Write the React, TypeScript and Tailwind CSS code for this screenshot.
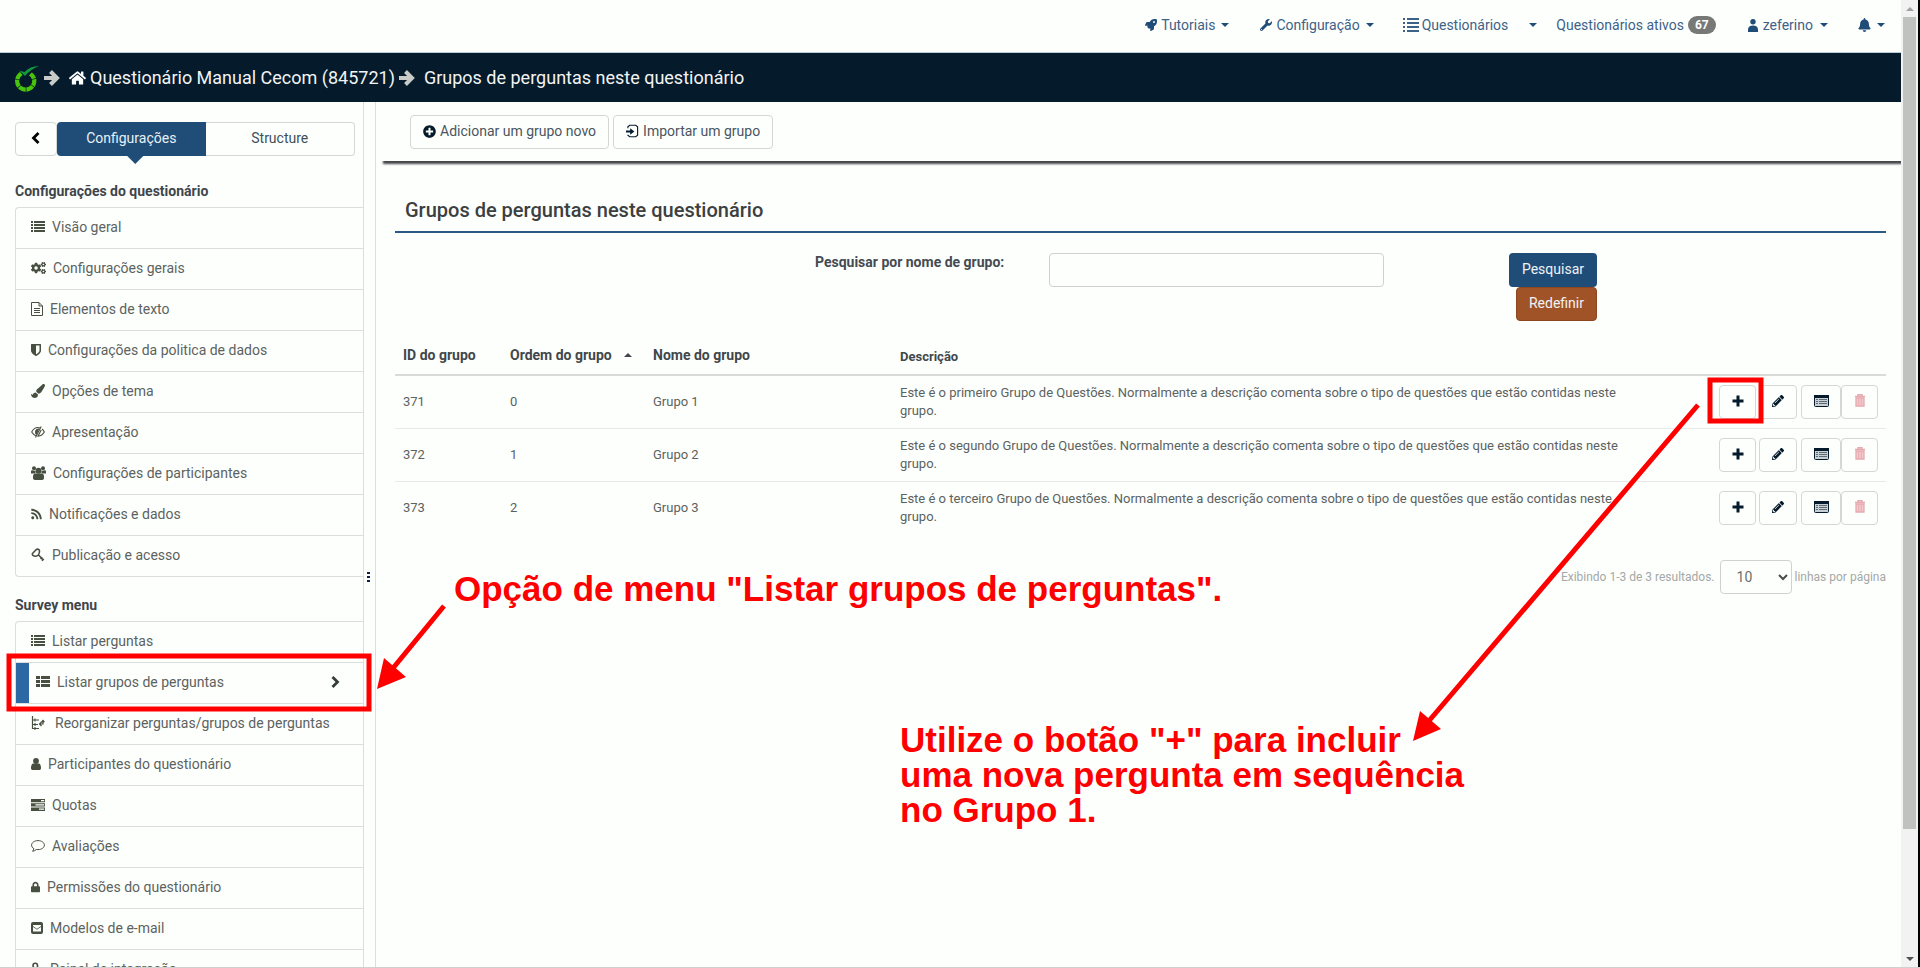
import React from "react";
import {
  FaBell, FaCogs, FaHome, FaLock, FaPaintBrush, FaPencilAlt, FaPlusCircle, FaRocket, FaRss, FaWrench,
} from "react-icons/fa";

type IconProps = { className?: string };

const CaretDown = ({ className }: IconProps) => (
  <svg viewBox="0 0 8 4" className={`h-1 w-2 shrink-0 ${className ?? ""}`} fill="currentColor" aria-hidden="true"><path d="M0 0h8L4 4z" /></svg>
);

const CaretUp = ({ className }: IconProps) => (
  <svg viewBox="0 0 8 4" className={`h-1 w-2 shrink-0 ${className ?? ""}`} fill="currentColor" aria-hidden="true"><path d="M0 4h8L4 0z" /></svg>
);

const ArrowRight = ({ className }: IconProps) => (
  <svg viewBox="0 0 16 16" className={className} fill="none" stroke="currentColor" strokeWidth="4" aria-hidden="true">
    <path d="M0 8h12M6.500 1.500 13 8l-6.500 6.500" />
  </svg>
);

const ChevronRight = ({ className }: IconProps) => (
  <svg viewBox="0 0 12 12" className={className} fill="none" stroke="currentColor" strokeWidth="2.800" aria-hidden="true"><path d="m3.500 1 5 5-5 5" /></svg>
);

const ChevronLeft = ({ className }: IconProps) => (
  <svg viewBox="0 0 12 12" className={className} fill="none" stroke="currentColor" strokeWidth="2.800" aria-hidden="true"><path d="m8.500 1-5 5 5 5" /></svg>
);

const ChevronDown = ({ className }: IconProps) => (
  <svg viewBox="0 0 10 10" className={className} fill="none" stroke="currentColor" strokeWidth="2" aria-hidden="true"><path d="m1 3 4 4 4-4" /></svg>
);

const Plus = ({ className }: IconProps) => (
  <svg viewBox="0 0 12 12" className={className} fill="none" stroke="currentColor" strokeWidth="3" aria-hidden="true"><path d="M6 .5v11M.5 6h11" /></svg>
);

const Trash = ({ className }: IconProps) => (
  <svg viewBox="0 0 12 13" className={className} fill="none" stroke="currentColor" aria-hidden="true">
    <path d="M1 2.500h10M4 2.500V.700h4v1.800" strokeWidth="1.400" />
    <path d="M2 4v8h8V4z" fill="#efc9cd" strokeWidth="1.300" />
    <path d="M4.700 5v6M7.300 5v6" strokeWidth="0.900" />
  </svg>
);

const List = ({ className }: IconProps) => (
  <svg viewBox="0 0 14 12" className={className} fill="currentColor" aria-hidden="true">
    <path d="M0 0h2v2H0zM3 0h11v2H3zM0 3h2v2H0zM3 3h11v2H3zM0 6h2v2H0zM3 6h11v2H3zM0 9h2v2H0zM3 9h11v2H3z" />
  </svg>
);

const NavList = ({ className }: IconProps) => (
  <svg viewBox="0 0 16 14" className={className} fill="currentColor" aria-hidden="true">
    <path d="M0 0h2v2H0zM4 0h12v2H4zM0 4h2v2H0zM4 4h12v2H4zM0 8h2v2H0zM4 8h12v2H4zM0 12h2v2H0zM4 12h12v2H4z" />
  </svg>
);

const ThList = ({ className }: IconProps) => (
  <svg viewBox="0 0 14 12" className={className} fill="currentColor" aria-hidden="true">
    <path d="M0 0h4v3H0zM5 0h9v3H5zM0 4h4v3H0zM5 4h9v3H5zM0 8h4v3H0zM5 8h9v3H5z" />
  </svg>
);

const FileText = ({ className }: IconProps) => (
  <svg viewBox="0 0 12 14" className={className} fill="none" stroke="currentColor" aria-hidden="true">
    <path d="M.5.5h7.500l3.500 3.500v9.500H.5zM8 .5V4h3.500M3 6.500h6M3 8.500h6M3 10.500h6" />
  </svg>
);

const Shield = ({ className }: IconProps) => (
  <svg viewBox="0 0 1280 1536" className={className} fill="currentColor" aria-hidden="true">
    <path d="M1088 832V192H640v1137q119-63 213-137 235-184 235-360zm192-768v768q0 86-33.500 170.500t-83 150-118 127.500-126.500 103-121 77.500-89.500 49.500-42.500 20q-12 6-26 6t-26-6q-16-7-42.500-20t-89.500-49.500-121-77.500-126.500-103-118-127.500-83-150T0 832V64q0-26 19-45T64 0h1152q26 0 45 19t19 45z" />
  </svg>
);

const EyeHalf = ({ className }: IconProps) => (
  <svg viewBox="0 0 14 12" className={className} aria-hidden="true">
    <path d="M9.500 2C6 .800 2.500 2.500.7 6c1 1.700 2.300 3 4.300 3.700" fill="none" stroke="currentColor" strokeWidth="1.100" />
    <path d="M8.300 2.500A3.500 3.500 0 0 0 4 6c0 1.300.5 2.300 1.500 3z" fill="currentColor" />
    <path d="M11 3c1 .700 1.800 1.700 2.300 3-1.300 2.500-3.500 4-6.300 4.200L10.200 4M10.200.5 4.500 11.500" fill="none" stroke="currentColor" strokeWidth="1.100" />
  </svg>
);

const Group = ({ className }: IconProps) => (
  <svg viewBox="0 0 15 14" className={className} aria-hidden="true" fill="currentColor">
    <circle cx="3" cy="2.200" r="2" /><circle cx="12" cy="2.200" r="2" />
    <path d="M0 7.500V5.500C0 4.500.8 4 1.500 4.200L4.500 5 4.500 7.500zM15 7.500V5.500c0-1-.8-1.500-1.500-1.300L10.500 5v2.500z" />
    <circle cx="7.500" cy="4.700" r="3" />
    <path d="M2 12V10.500C2 8.500 3 7.500 4.500 7.500h6c1.500 0 2.500 1 2.500 3V12c0 1.200-.8 2-2 2H4c-1.200 0-2-.8-2-2z" />
  </svg>
);

const User = ({ className }: IconProps) => (
  <svg viewBox="0 0 10 12" className={className} aria-hidden="true" fill="currentColor">
    <circle cx="5" cy="3" r="2.900" />
    <path d="M0 10.200C0 7.500.8 5.600 2.500 5.600h5C9.200 5.600 10 7.500 10 10.200 10 11.300 9.200 12 8.200 12H1.800C.8 12 0 11.300 0 10.200z" />
  </svg>
);

const CommentOutline = ({ className }: IconProps) => (
  <svg viewBox="0 0 14 12" className={className} aria-hidden="true" fill="none" stroke="currentColor">
    <path d="M7 .600c3.600 0 6.400 2 6.400 4.500S10.600 9.600 7 9.600c-.6 0-1.100 0-1.600-.1-1.100.9-2.400 1.600-3.900 1.800.7-.7 1.200-1.500 1.400-2.600C1.400 7.900.6 6.600.6 5.100.6 2.600 3.400.6 7 .6z" />
  </svg>
);

const KeyOutline = ({ className }: IconProps) => (
  <svg viewBox="0 0 14 14" className={className} aria-hidden="true" fill="none" stroke="currentColor" strokeWidth="1.600">
    <path d="M1.500 5.500 5 1.800c1.500-1.400 3.500-.4 3.500 1.200 0 1.800-1 5-3.500 5.200C3 8.400.8 7.500 1.500 5.500zM7 6.500l5.500 5.500M9.500 11l1.700-1.700M11 12.800l1.800-1.800" />
  </svg>
);

const Tree = ({ className }: IconProps) => (
  <svg viewBox="0 0 14 14" className={className} aria-hidden="true" fill="none" stroke="currentColor">
    <path d="M1.500 0v12.500H8M1.500 4H8M1.500 8.500H7" strokeWidth="1.200" />
    <path d="M4 2.500v3M4 7v3M4 11v3" strokeWidth="1.100" />
    <path d="M9 8h3V5M10.600 6 12 4.500 13.400 6M10.500 6 8.500 8l2 2" strokeWidth="1.200" />
  </svg>
);

const Tasks = ({ className }: IconProps) => (
  <svg viewBox="0 0 14 12" className={className} aria-hidden="true">
    <path d="M0 0h14v3.300H0zM0 4.300h14v3.300H0zM0 8.600h14v3.300H0z" fill="currentColor" />
    <path d="M10 1h3.200v1.200H10zM4.500 5.300h8.700v1.200H4.500zM8 9.600h5.200v1.200H8z" fill="#fdfffd" />
  </svg>
);

const MailSquare = ({ className }: IconProps) => (
  <svg viewBox="0 0 12 12" className={className} aria-hidden="true">
    <rect width="12" height="12" rx="2" fill="currentColor" />
    <path d="M2 3h8v6.500H2z" fill="#fdfffd" />
    <path d="m2 4.500 4 2.800 4-2.800" fill="none" stroke="currentColor" strokeWidth="0.800" />
  </svg>
);

const Plug = ({ className }: IconProps) => (
  <svg viewBox="0 0 12 14" className={className} aria-hidden="true" fill="none" stroke="currentColor" strokeWidth="1.600">
    <path d="M2 3.500C2 .500 6.500.5 6.500 3.500v4L11 12M2 3.500C2 6 5 7 6.500 5" />
  </svg>
);

const ImportIcon = ({ className }: IconProps) => (
  <svg viewBox="0 0 14 14" className={className} aria-hidden="true">
    <path d="M2 4V2.500L4 .800h6.500l2 1.700v9l-2 1.700H4l-2-1.700v-.5" fill="none" stroke="currentColor" strokeWidth="1.200" />
    <path d="M0 6.500h4.500V4L9 7.500 4.500 11V8.500H0z" fill="currentColor" />
  </svg>
);

const ListAlt = ({ className }: IconProps) => (
  <svg viewBox="0 0 15 12" className={className} aria-hidden="true">
    <rect x="0.500" y="0.500" width="14" height="11" rx="1" fill="#c9d0d4" stroke="currentColor" />
    <path d="M0 0h15v3H0z" fill="currentColor" />
    <path d="M2 4.500h2M2 6.500h2M2 8.500h2M5 4.500h8M5 6.500h8M5 8.500h8" stroke="#5d6b74" strokeWidth="1" />
  </svg>
);

const UserPawn = ({ className }: IconProps) => (
  <svg viewBox="0 0 10 13" className={className} aria-hidden="true" fill="currentColor">
    <circle cx="5" cy="2.800" r="2.700" />
    <path d="M0 13v-2.500C0 8 2 6.600 5 6.600s5 1.400 5 3.900V13z" />
  </svg>
);

const Lime = ({ className }: IconProps) => (
  <svg viewBox="0 0 24 28" className={className} aria-hidden="true">
    <circle cx="10.700" cy="17" r="8.600" fill="none" stroke="#48c40c" strokeWidth="4.200" strokeDasharray="7 0.700" strokeDashoffset="2" />
    <path d="M2.500 5h17.500L11 14.500z" fill="#051a2b" />
    <path d="M4 6.500 9.500 8Q15 2 24 2 16 5 10 12 7 8.800 4 6.500z" fill="#12993c" />
  </svg>
);

type Item = { label: string; Icon: React.ComponentType<IconProps>; size: string; active?: boolean };

const settingsMenu: Item[] = [
  { label: "Visão geral", Icon: List, size: "w-3.5 h-3" },
  { label: "Configurações gerais", Icon: FaCogs, size: "w-[15px] h-3.5" },
  { label: "Elementos de texto", Icon: FileText, size: "w-3 h-3.5" },
  { label: "Configurações da politica de dados", Icon: Shield, size: "w-2.5 h-3" },
  { label: "Opções de tema", Icon: FaPaintBrush, size: "w-3.5 h-3.5" },
  { label: "Apresentação", Icon: EyeHalf, size: "w-3.5 h-3" },
  { label: "Configurações de participantes", Icon: Group, size: "w-[15px] h-3.5" },
  { label: "Notificações e dados", Icon: FaRss, size: "w-[11px] h-3" },
  { label: "Publicação e acesso", Icon: KeyOutline, size: "w-3.5 h-3.5" },
];

const surveyMenu: Item[] = [
  { label: "Listar perguntas", Icon: List, size: "w-3.5 h-3" },
  { label: "Listar grupos de perguntas", Icon: ThList, size: "w-3.5 h-3", active: true },
  { label: "Reorganizar perguntas/grupos de perguntas", Icon: Tree, size: "w-3.5 h-3.5 mr-[3px]" },
  { label: "Participantes do questionário", Icon: User, size: "w-2.5 h-3" },
  { label: "Quotas", Icon: Tasks, size: "w-3.5 h-3" },
  { label: "Avaliações", Icon: CommentOutline, size: "w-3.5 h-3" },
  { label: "Permissões do questionário", Icon: FaLock, size: "w-[9px] h-3" },
  { label: "Modelos de e-mail", Icon: MailSquare, size: "w-3 h-3" },
  { label: "Painel de integração", Icon: Plug, size: "w-3 h-3.5" },
];

const groups = [
  { id: 371, order: 0, name: "Grupo 1", ordinal: "primeiro" },
  { id: 372, order: 1, name: "Grupo 2", ordinal: "segundo" },
  { id: 373, order: 2, name: "Grupo 3", ordinal: "terceiro" },
];

function Menu({ title, items }: { title: string; items: Item[] }) {
  return (
    <nav aria-label={title} className="pl-[15px]">
      <h2 className="h-8 pt-1.5 text-sm leading-5 font-bold text-[#3f454b]">{title}</h2>
      <ul className="divide-y divide-[#dcdedc] rounded-l border border-r-0 border-[#dcdedc]">
        {items.map(({ label, Icon, size, active }) => (
          <li key={label}>
            <a href="#" className={active ? "flex h-10 items-center gap-[7px] border-l-[13px] border-[#2c68a3] pr-[22px] pb-0.5 pl-[7px]" : "flex h-10 items-center gap-[7px] pr-[22px] pb-0.5 pl-[15px]"}>
              <Icon className={`${size} shrink-0 text-[#474f40]`} />
              <span className="whitespace-nowrap">{label}</span>
              {active && <ChevronRight className="ml-auto h-3 w-3 text-[#333d39]" />}
            </a>
          </li>
        ))}
      </ul>
    </nav>
  );
}

const outline = "flex h-[34px] items-center justify-center rounded border border-[#d3d7d6] bg-[#fdfffd] pb-0.5";
const note = "absolute whitespace-nowrap font-['Liberation_Sans',sans-serif] text-[35px] leading-[35px] font-bold text-[#ff0000]";

export default function App() {
  return (
    <div className="relative flex h-screen overflow-hidden border-b border-[#cfd1cf] bg-[#fdfffd] font-[Roboto,sans-serif] text-sm leading-5 text-[#5c6260]">
      <div className="flex min-w-0 flex-1 flex-col">
        <nav aria-label="Principal" className="flex h-[53px] shrink-0 items-center justify-end border-b border-[#b9cdd8] pr-4 pb-0.5 whitespace-nowrap text-[#3d6288]">
          <a href="#" className="mr-[31px] flex items-center gap-1"><FaRocket className="h-3 w-3 text-[#204d78]" />Tutoriais<CaretDown className="ml-0.5 text-[#204d78]" /></a>
          <a href="#" className="mr-[29px] flex items-center gap-1"><FaWrench className="h-3 w-3 text-[#204d78]" />Configuração<CaretDown className="ml-0.5 text-[#204d78]" /></a>
          <a href="#" className="mr-[21px] flex items-center gap-[3px]"><NavList className="h-3.5 w-4" />Questionários</a>
          <button type="button" aria-label="Abrir questionários" className="mr-[19px] text-[#204d78]"><CaretDown /></button>
          <a href="#" className="mr-8 flex items-center gap-1">Questionários ativos<span className="rounded-full bg-[#777977] px-[7px] py-[3px] text-xs leading-3 font-bold text-white">67</span></a>
          <a href="#" className="mr-[30px] flex items-center gap-[5px]"><UserPawn className="h-[13px] w-2.5 text-[#204d78]" />zeferino<CaretDown className="ml-0.5 text-[#204d78]" /></a>
          <button type="button" aria-label="Notificações" className="flex items-center gap-1.5 text-[#204d78]"><FaBell className="h-3.5 w-[13px]" /><CaretDown /></button>
        </nav>

        <header className="flex h-[49px] shrink-0 items-center bg-[#051a2b] pl-[15px] text-lg text-[#f2f4f3]">
          <Lime className="h-7 w-6" />
          <ArrowRight className="mr-[9px] ml-[5px] h-4 w-4 text-[#c9cbc9]" />
          <a href="#" className="flex items-center gap-1 whitespace-nowrap"><FaHome className="h-4 w-[17px] text-white" />Questionário Manual Cecom (845721)</a>
          <ArrowRight className="mr-[9px] ml-1 h-4 w-4 text-[#c9cbc9]" />
          <h1 className="whitespace-nowrap">Grupos de perguntas neste questionário</h1>
        </header>

        <div className="flex min-h-0 flex-1">
          <aside className="flex w-[364px] shrink-0 flex-col overflow-hidden border-r border-[#dcdedc]">
            <div className="mb-[19px] flex shrink-0 pt-5 pr-2 pl-[15px]">
              <button type="button" aria-label="Recolher" className="flex h-[34px] w-[42px] items-center justify-center rounded border border-[#d3d7d6] pb-0.5 text-black"><ChevronLeft className="h-3 w-3" /></button>
              <div className="relative flex-1">
                <button type="button" className="h-[34px] w-full rounded-l bg-[#204d78] pb-0.5 text-[#e8f0f6]">Configurações</button>
                <span className="absolute top-[34px] left-1/2 -ml-1 h-2 w-4 bg-[#204d78] [clip-path:polygon(0_0,100%_0,50%_100%)]" />
              </div>
              <button type="button" className="h-[34px] flex-1 rounded-r border border-l-0 border-[#d3d7d6] pb-0.5 text-[#3f4f58]">Structure</button>
            </div>
            <Menu title="Configurações do questionário" items={settingsMenu} />
            <div className="h-3 shrink-0" />
            <Menu title="Survey menu" items={surveyMenu} />
          </aside>
          <div className="flex w-3 shrink-0 items-center border-r border-[#dcdedc] pt-[84px] pl-[3px]">
            <svg viewBox="0 0 3 10" className="h-2.5 w-[3px]" fill="#0b2044" aria-hidden="true"><path d="M0 0h3v2H0zM0 4h3v2H0zM0 8h3v2H0z" /></svg>
          </div>

          <main className="min-w-0 flex-1">
            <div className="ml-1 flex h-[59px] gap-1 pt-[13px] pl-[30px] text-[#4a5560] shadow-[3px_3px_2px_#44464a]">
              <button type="button" className={`${outline} gap-1 px-3`}><FaPlusCircle className="h-[13px] w-[13px] text-[#051a2b]" />Adicionar um grupo novo</button>
              <button type="button" className={`${outline} gap-1 px-3`}><ImportIcon className="h-3.5 w-[13px] text-[#051a2b]" />Importar um grupo</button>
            </div>

            <section className="mr-[15px] ml-[19px]">
              <h2 className="border-b-2 border-[#2b5a86] px-2.5 pt-[35px] pb-[7px] text-xl leading-7 font-medium text-[#3c4040]">Grupos de perguntas neste questionário</h2>

              <form className="flex pt-5" onSubmit={(e) => e.preventDefault()}>
                <label htmlFor="group-name" className="-mt-px w-[41%] pr-0.5 text-right font-bold text-[#454b51]">Pesquisar por nome de grupo:</label>
                <div className="flex w-[23%] pl-[43px]">
                  <input id="group-name" type="text" className="h-[34px] min-w-[335px] rounded border border-[#cfd2cf] bg-transparent px-3" />
                </div>
                <div className="flex flex-1 flex-col items-end pr-[289px] text-[#eef3f7]">
                  <button type="submit" className="h-[34px] rounded bg-[#204d78] px-[13px] pb-0.5">Pesquisar</button>
                  <button type="reset" className="h-[34px] rounded border border-[#8d4620] bg-[#a15328] px-3 pb-0.5">Redefinir</button>
                </div>
              </form>

              <table className="mt-[18px] w-full table-fixed border-collapse text-left">
                <colgroup>
                  <col className="w-[107px]" /><col className="w-[143px]" /><col className="w-[247px]" /><col /><col className="w-[173px]" />
                </colgroup>
                <thead>
                  <tr className="h-9 border-b-2 border-[#d9dbd9] text-sm text-[#41474b]">
                    <th className="px-2 pb-[3px]">ID do grupo</th>
                    <th className="px-2 pb-[3px] whitespace-nowrap"><a href="#" className="flex items-center gap-3">Ordem do grupo<CaretUp /></a></th>
                    <th className="px-2 pb-[3px]">Nome do grupo</th>
                    <th className="px-2 pt-0.5 text-[13px]">Descrição</th>
                    <th aria-label="Ações" />
                  </tr>
                </thead>
                <tbody className="text-[13px] leading-[18px]">
                  {groups.map((g) => (
                    <tr key={g.id} className="h-[53px] border-b border-[#e8eae8] last:border-b-0">
                      <td className="px-2">{g.id}</td>
                      <td className="px-2">{g.order}</td>
                      <td className="px-2">{g.name}</td>
                      <td className="px-2"><p className="max-w-[740px]">Este é o {g.ordinal} Grupo de Questões. Normalmente a descrição comenta sobre o tipo de questões que estão contidas neste grupo.</p></td>
                      <td className="pr-2">
                        <div className="flex justify-end text-[#051a2b]">
                          <button type="button" aria-label="Adicionar pergunta" className={`${outline} mr-[3px] w-[37px]`}><Plus className="h-3 w-3" /></button>
                          <button type="button" aria-label="Editar" className={`${outline} mr-1 w-[38px]`}><FaPencilAlt className="h-3 w-3" /></button>
                          <button type="button" aria-label="Resumo" className={`${outline} w-10`}><ListAlt className="h-3 w-[15px]" /></button>
                          <button type="button" aria-label="Excluir" className={`${outline} w-[37px] text-[#e6a9ae]`}><Trash className="h-[13px] w-3" /></button>
                        </div>
                      </td>
                    </tr>
                  ))}
                </tbody>
              </table>

              <div className="mt-[26px] flex items-center justify-end text-xs text-[#a5a8a5]">
                <label htmlFor="rows" className="pr-[5px]">Exibindo 1-3 de 3 resultados.</label>
                <div className="relative flex items-center">
                  <select id="rows" defaultValue="10" className="h-[34px] w-[72px] appearance-none rounded border border-[#cfd2cf] bg-[#fdfffd] pl-4 text-sm text-[#6a6f6c]"><option>10</option></select>
                  <ChevronDown className="pointer-events-none absolute right-1 h-2.5 w-2.5 text-[#4a4e4b]" />
                </div>
                <span className="pl-[3px]">linhas por página</span>
              </div>
            </section>
          </main>
        </div>
      </div>

      <div aria-hidden="true" className="flex w-[19px] shrink-0 flex-col items-center border-r-2 border-black bg-[#f1f2f1] pt-[7px]">
        <CaretUp className="text-[#a0a2a0]" />
        <div className="mt-1.5 h-[812px] w-[13px] bg-[#c0c2c0]" />
        <CaretDown className="mt-auto mb-1.5 text-[#505250]" />
      </div>

      <svg className="pointer-events-none absolute top-0 left-0 h-[968px] w-[1920px]" viewBox="0 0 1920 968" fill="none" stroke="#ff0000" strokeWidth="5" aria-hidden="true">
        <rect x="9" y="656" width="360" height="53" />
        <rect x="1710" y="380" width="51" height="41" />
        <path d="M444 606 389 673M1698 405 1428 722" />
        <path d="M377 689 384 658 406 677zM1413 741 1420 711 1441 729z" fill="#ff0000" stroke="none" />
      </svg>
      <p className={`${note} top-[571px] left-[454px]`}>Opção de menu "Listar grupos de perguntas".</p>
      <p className={`${note} top-[722px] left-[900px]`}>Utilize o botão "+" para incluir<br />uma nova pergunta em sequência<br />no Grupo 1.</p>
    </div>
  );
}
